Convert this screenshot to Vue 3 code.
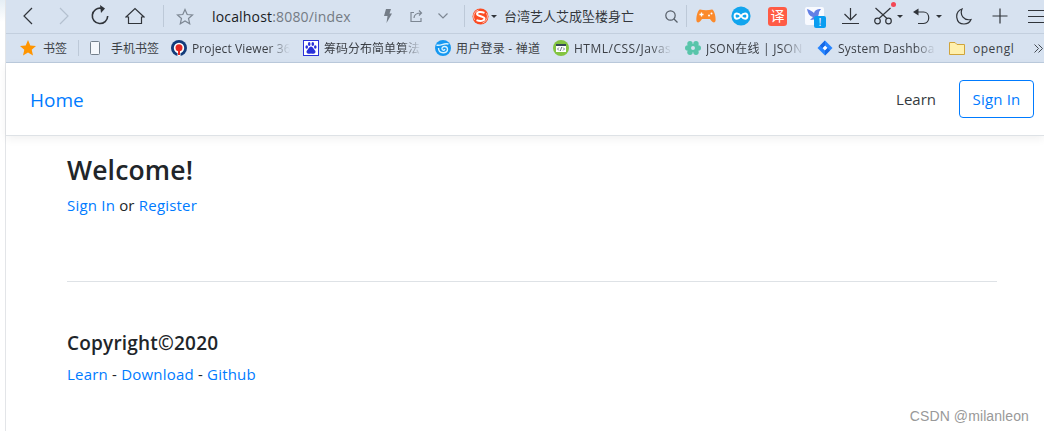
<script setup>
const bookmarks = [
  { name: '书签', icon: 'star', width: 27 },
  { name: '手机书签', icon: 'phone', width: 49 },
  { name: 'Project Viewer 36', icon: 'ring', width: 98, fade: true },
  { name: '筹码分布简单算法', icon: 'paw', width: 98, fade: true },
  { name: '用户登录 - 禅道', icon: 'swirl', width: 84 },
  { name: 'HTML/CSS/Javas', icon: 'code', width: 98, fade: true },
  { name: 'JSON在线 | JSON', icon: 'flower', width: 98, fade: true },
  { name: 'System Dashboa', icon: 'jira', width: 98, fade: true },
  { name: 'opengl', icon: 'folder', width: 42 }
]
</script>

<template>
  <div class="window">
    <div class="edge"></div>
    <div class="browser">

      <!-- Toolbar -->
      <div class="toolbar">
        <svg class="back" width="12" height="18" viewBox="0 0 12 18"><path d="M10 1L2 9l8 8" /></svg>
        <svg class="forward" width="12" height="18" viewBox="0 0 12 18"><path d="M2 1l8 8-8 8" /></svg>
        <svg class="reload" width="18" height="20" viewBox="0 0 18 20">
          <path d="M10.500 3.300A7.700 7.700 0 1 0 16.700 11" /><path class="solid" d="M9 0l5 3.500L10 8z" />
        </svg>
        <svg class="home" width="20" height="18" viewBox="0 0 20 18"><path d="M1 10l9-8.500L19 10h-2.500v6.500h-13V10z" /></svg>
        <i class="divider first"></i>
        <svg class="fav" width="18" height="17" viewBox="0 0 18 17"><path d="M9 1.500l2.200 5 5.300.5-4 3.500 1.200 5.200L9 13l-4.700 2.700 1.200-5.200-4-3.500 5.300-.5z" /></svg>
        <span class="url"><b>localhost</b>:8080/index</span>
        <svg class="bolt" width="8" height="14" viewBox="0 0 8 14"><path d="M2 0h5L5.500 4.500H8L2.500 14l1-7H0z" /></svg>
        <svg class="share" width="13" height="12" viewBox="0 0 13 12"><path d="M4 2.500H1v9h10V8M4 8c0-3.500 2.500-5 7.500-5M9 .5L11.500 3 9 5.500" /></svg>
        <svg class="down" width="10" height="6" viewBox="0 0 10 6"><path d="M.5.5L5 5 9.500.5" /></svg>
        <i class="divider second"></i>
        <svg class="sogou" width="17" height="17" viewBox="0 0 17 17">
          <circle cx="8.500" cy="8.500" r="8" fill="#fb4b22" />
          <path d="M12.500 4.800C9 3.500 5 3.700 5 6.100s7.500 1.900 7.500 4.500-4.500 2.900-8 1.500" fill="none" stroke="#fff" stroke-width="1.900" />
          <path d="M2.500 12a6.800 6.800 0 0 1 4-10M14.500 5a6.800 6.800 0 0 1-4 10" fill="none" stroke="#fbd9d3" stroke-width=".8" />
        </svg>
        <i class="caret"></i>
        <span class="query">台湾艺人艾成坠楼身亡</span>
        <svg class="search" width="13" height="13" viewBox="0 0 13 13"><circle cx="5.500" cy="5.500" r="4.700" /><path d="M9 9l3.500 3.500" /></svg>
        <i class="divider third"></i>
        <svg class="pad" width="20" height="14" viewBox="0 0 20 14">
          <path d="M4 .5Q10 2 16 .5c2 0 4 7 3.600 11-.3 2.500-2.600 2.500-4.100.5L14 10H6l-1.500 2C3 14 .7 14 .4 11.500 0 7.500 2 .5 4 .5z" fill="#fb8a2c" />
          <path d="M3.500 5.500h4m-2-2v4" stroke="#fff" stroke-width="1.300" /><circle cx="13" cy="6.500" r="1" fill="#fff" /><circle cx="15.500" cy="4.500" r="1" fill="#fff" />
        </svg>
        <svg class="loop" width="20" height="20" viewBox="0 0 20 20">
          <circle cx="10" cy="10" r="9.600" fill="#12a5ee" />
          <path d="M10 10C7.500 6.500 3.600 6.500 3.600 10s3.900 3.500 6.400 0 6.400-3.500 6.400 0-3.900 3.500-6.400 0z" fill="none" stroke="#fff" stroke-width="2" />
        </svg>
        <span class="translate">译</span>
        <span class="bird">
          <svg width="19" height="18" viewBox="0 0 19 18">
            <rect width="19" height="18" rx="2" fill="#f8faff" />
            <path d="M2 2c3 1 5 2 7 4 1-3 3-4 7-4l-2 3c0 5-3 8-9 8l3-3C4 9 3 6 2 2z" fill="#627fe5" />
          </svg>
          <em>!</em>
        </span>
        <svg class="download" width="17" height="16" viewBox="0 0 17 16"><path d="M8.500 0v12M2.500 6l6 6 6-6M0 15.500h17" /></svg>
        <span class="cut">
          <svg width="18" height="18" viewBox="0 0 18 18">
            <circle cx="3.500" cy="14" r="2.800" /><circle cx="14.500" cy="14" r="2.800" /><path d="M1.500 1L13 11.500M16.500 1L5 11.500" />
          </svg>
          <i class="dot"></i>
        </span>
        <i class="caret after-cut"></i>
        <svg class="undo" width="17" height="17" viewBox="0 0 17 17"><path d="M2 4h8.500c7 0 7 11.500 0 11.500H5" /><path class="solid" d="M0 4l5.500-3.500v7z" /></svg>
        <i class="caret after-undo"></i>
        <svg class="moon" width="16" height="17" viewBox="0 0 16 17"><path d="M6 1C-2 4-.5 16 8 16c3.500 0 6-2 7-4.500C8 13 3.500 7 6 1z" /></svg>
        <svg class="plus" width="16" height="16" viewBox="0 0 16 16"><path d="M8 .5v15M.5 8h15" /></svg>
        <svg class="menu" width="16" height="15" viewBox="0 0 16 15"><path d="M0 1.500h16M0 7.500h16M0 13.500h16" /></svg>
      </div>

      <!-- Bookmarks -->
      <div class="bookmarks">
        <div v-for="mark in bookmarks" :key="mark.name" class="mark" :class="mark.icon">
          <svg class="mark-icon" width="16" height="16" viewBox="0 0 16 16">
            <path v-if="mark.icon === 'star'" d="M8 0l2.300 5.400 5.700.5-4.300 3.800L13 15.400l-5-3-5 3 1.300-5.700L0 5.900l5.700-.5z" fill="#ff9500" />
            <rect v-else-if="mark.icon === 'phone'" x="3.500" y="1.500" width="9" height="13" rx="1" fill="#f5f8fc" stroke="#74808c" />
            <g v-else-if="mark.icon === 'ring'">
              <circle cx="8" cy="8" r="8" fill="#123b7b" /><circle cx="8" cy="8" r="5.200" fill="#fff" />
              <circle cx="8" cy="7.700" r="3.500" fill="#e32723" /><path d="M6.500 12h3v4h-3z" fill="#fff" /><path d="M7 10h2v5H7z" fill="#e32723" />
            </g>
            <g v-else-if="mark.icon === 'paw'" fill="#2a31d9">
              <rect x=".5" y=".5" width="15" height="15" fill="#fff" stroke="#2a31d9" />
              <ellipse cx="3.700" cy="7" rx="1.300" ry="1.800" /><ellipse cx="6.200" cy="4" rx="1.300" ry="1.900" />
              <ellipse cx="9.800" cy="4" rx="1.300" ry="1.900" /><ellipse cx="12.300" cy="7" rx="1.300" ry="1.800" />
              <path d="M8 6.500c2 0 2.500 2.500 4 4 1.500 2-.5 4-4 3-3.500 1-5.500-1-4-3 1.500-1.500 2-4 4-4z" />
            </g>
            <g v-else-if="mark.icon === 'swirl'">
              <circle cx="8" cy="8" r="8" fill="#1598f1" />
              <path d="M1.500 5c4 1.500 7-2.500 12-1M3.500 8c0 6.500 9.500 6 9 1-.5-3.500-6-3-5.500 0 .3 1.700 2.800 1.500 2.700 0" fill="none" stroke="#d8f3ff" stroke-width="1.400" />
            </g>
            <g v-else-if="mark.icon === 'code'">
              <circle cx="8" cy="8" r="8" fill="#83c441" /><rect x="3" y="4" width="10" height="8" fill="#fff" />
              <path d="M3 4h10v2H3z" fill="#354956" />
              <path d="M6 7.500L4.500 9 6 10.500m4-3L11.500 9 10 10.500M8.700 7l-1.400 4" fill="none" stroke="#354956" stroke-width=".7" />
            </g>
            <g v-else-if="mark.icon === 'flower'" fill="#59c5aa">
              <circle cx="5" cy="3.700" r="2.700" /><circle cx="11" cy="3.700" r="2.700" /><circle cx="2.700" cy="8" r="2.700" />
              <circle cx="13.300" cy="8" r="2.700" /><circle cx="5" cy="12.300" r="2.700" /><circle cx="11" cy="12.300" r="2.700" />
              <path fill-rule="evenodd" d="M4 4h8v8H4zM8 6a2 2 0 1 0 0 4 2 2 0 0 0 0-4z" />
            </g>
            <g v-else-if="mark.icon === 'jira'">
              <path d="M8 .5L15.500 8 8 15.500.5 8z" fill="#2684ff" /><path d="M8 5.500L10.500 8 8 10.500 5.500 8z" fill="#fff" />
              <path d="M8 .5v5L5.500 8 3 5.500zM8 10.500L10.500 8l2.500 2.500-5 5z" fill="#1769e5" />
            </g>
            <path v-else d="M.5 2.500h5.500l2 2h7.500v10H.5z" fill="#fff0ad" stroke="#d0a43b" />
          </svg>
          <span class="mark-name" :class="{ fade: mark.fade }" :style="{ width: mark.width + 'px' }">{{ mark.name }}</span>
        </div>
        <svg class="more" width="9" height="9" viewBox="0 0 9 9"><path d="M.5.5l4 4-4 4M4.500.5l4 4-4 4" /></svg>
      </div>

      <!-- Page -->
      <header class="navbar">
        <a class="brand">Home</a>
        <a class="learn">Learn</a>
        <a class="btn">Sign In</a>
      </header>

      <main class="container">
        <h2>Welcome!</h2>
        <p><a>Sign In</a> or <a>Register</a></p>
        <footer>
          <h5>Copyright©2020</h5>
          <p class="links"><a>Learn</a> - <a>Download</a> - <a>Github</a></p>
        </footer>
      </main>
      <div class="watermark">CSDN @milanleon</div>
    </div>
  </div>
</template>

<style>
body {
  margin: 0;
  background: #fff;
}
</style>

<style scoped>
.window {
  display: flex;
  width: 1044px;
  height: 431px;
  overflow: hidden;
  font-family: "Open Sans", "Noto Sans CJK SC", sans-serif;
  color: #212529;
}

.edge {
  box-sizing: border-box;
  width: 6px;
  flex: none;
  border-right: 1px solid #e3e5e8;
  background: linear-gradient(#e5eef5, #fff 22px);
}

.browser {
  position: relative;
  width: 1038px;
  flex: none;
}

svg {
  flex: none;
  display: block;
}

.toolbar {
  box-sizing: border-box;
  display: flex;
  align-items: center;
  height: 34px;
  padding-bottom: 1px;
  background: #d7e2f0;
  border-bottom: 1px solid #c3cfde;
  overflow: hidden;
}

.toolbar > svg,
.cut > svg {
  fill: none;
  stroke: #30343a;
  stroke-width: 1.2;
}

.toolbar .pad,
.toolbar .loop,
.toolbar .sogou {
  stroke: none;
}

.back { margin-left: 16px; }

.toolbar .forward {
  margin-left: 24px;
  stroke: #b4c0cf;
}

.toolbar .reload {
  margin: 0 0 2px 21px;
  stroke-width: 1.6;
}

.toolbar .solid {
  fill: #30343a;
  stroke: none;
}

.home { margin-left: 16px; }

.divider {
  width: 1px;
  height: 22px;
  flex: none;
  background: #bdc9d8;
}

.first { margin-left: 18px; }
.second { margin-left: 16px; }
.third { margin-left: 8px; }

.toolbar .fav {
  margin-left: 12px;
  stroke: #7d8793;
}

.url {
  width: 172px;
  margin-left: 18px;
  flex: none;
  font-size: 14px;
  letter-spacing: 0.17px;
  white-space: nowrap;
  color: #747b84;
}

.url b {
  font-weight: 400;
  color: #1a1c1f;
}

.toolbar .bolt {
  fill: #747d88;
  stroke: none;
}

.toolbar .share {
  margin-left: 18px;
  stroke: #7d8793;
}

.toolbar .down {
  margin-left: 15px;
  stroke: #7d8793;
}

.sogou { margin-left: 7px; }

.caret {
  width: 0;
  flex: none;
  margin-left: 2px;
  border: 3px solid transparent;
  border-top-color: #30343a;
  border-bottom: 0;
}

.query {
  width: 131px;
  margin: 0 0 2px 7px;
  flex: none;
  font-size: 13px;
  white-space: nowrap;
  color: #33373c;
}

.toolbar .search {
  margin-left: 30px;
  stroke: #565e68;
}

.pad { margin-left: 9px; }
.loop { margin-left: 15px; }

.translate {
  width: 19px;
  height: 19px;
  margin-left: 17px;
  flex: none;
  border-radius: 3px;
  background: #ff5b45;
  color: #fff;
  font-size: 14px;
  line-height: 18px;
  text-align: center;
}

.bird {
  position: relative;
  margin-left: 18px;
}

.bird em {
  position: absolute;
  left: 9px;
  top: 9px;
  width: 12px;
  height: 12px;
  border-radius: 2px;
  background: #0a9df0;
  color: #fff;
  font-size: 11px;
  font-style: normal;
  line-height: 12px;
  text-align: center;
}

.download { margin-left: 18px; }

.cut {
  position: relative;
  margin-left: 15px;
}

.dot {
  position: absolute;
  left: 17px;
  top: -5px;
  width: 5px;
  height: 5px;
  border-radius: 50%;
  background: #f34755;
}

.after-cut { margin-left: 5px; }
.undo { margin-left: 10px; }
.after-undo { margin-left: 6px; }
.moon { margin-left: 14px; }
.plus { margin-left: 20px; }
.menu { margin-left: 20px; }

.bookmarks {
  box-sizing: border-box;
  display: flex;
  align-items: center;
  height: 29px;
  padding-left: 14px;
  background: #d7e2f0;
  border-bottom: 1px solid #bccbdd;
  overflow: hidden;
}

.mark {
  display: flex;
  align-items: center;
  flex: none;
  gap: 5px;
  margin-right: 13px;
}

.mark.star {
  gap: 7px;
  height: 16px;
  width: 58px;
  margin-right: 8px;
  border-right: 1px solid #bdc9d8;
}

.mark.phone {
  gap: 8px;
  margin-right: 11px;
}

.mark.folder { gap: 8px; }

.mark-name {
  overflow: hidden;
  font-size: 12px;
  line-height: 18px;
  padding-top: 1px;
  white-space: nowrap;
  color: #3b3f45;
}

.ring .mark-name {
  letter-spacing: 0.1px;
}

.jira .mark-name {
  letter-spacing: 0.25px;
}

.code .mark-name,
.folder .mark-name {
  letter-spacing: 0.5px;
}

.swirl .mark-name,
.flower .mark-name {
  letter-spacing: 0.25px;
}

.fade {
  mask-image: linear-gradient(90deg, #000 78%, transparent);
}

.more {
  margin-left: 6px;
  fill: none;
  stroke: #444a52;
}

.navbar {
  box-sizing: border-box;
  display: flex;
  align-items: center;
  height: 73px;
  padding: 0 10px 0 24px;
  border-bottom: 1px solid #dee2e6;
  box-shadow: 0 3px 9px rgba(0, 0, 0, 0.06);
}

a { color: #007bff; }

.brand {
  flex: 1;
  padding-top: 1px;
  font-size: 19px;
}

.learn {
  margin-right: 23px;
  font-size: 15px;
  color: #343a40;
}

.btn {
  box-sizing: border-box;
  width: 75px;
  height: 38px;
  border: 1px solid #007bff;
  border-radius: 4px;
  font-size: 15px;
  letter-spacing: 0.2px;
  line-height: 37px;
  text-align: center;
}

.container {
  width: 930px;
  margin-left: 61px;
  padding-top: 17px;
  font-size: 15px;
}

h2 {
  margin: 0 0 6px;
  font-size: 26.5px;
  font-weight: 600;
  letter-spacing: 0.15px;
  line-height: 34px;
}

p {
  margin: 0;
  line-height: 24px;
  letter-spacing: 0.2px;
}

footer {
  margin-top: 64px;
  padding-top: 49px;
  border-top: 1px solid #dee2e6;
}

h5 {
  margin: 0 0 7px;
  font-size: 19px;
  font-weight: 600;
  letter-spacing: 0.2px;
  line-height: 24px;
}

.watermark {
  position: absolute;
  right: 15px;
  bottom: 7px;
  font-family: "Liberation Sans", sans-serif;
  font-size: 14px;
  letter-spacing: 0.1px;
  color: #999;
}
</style>
